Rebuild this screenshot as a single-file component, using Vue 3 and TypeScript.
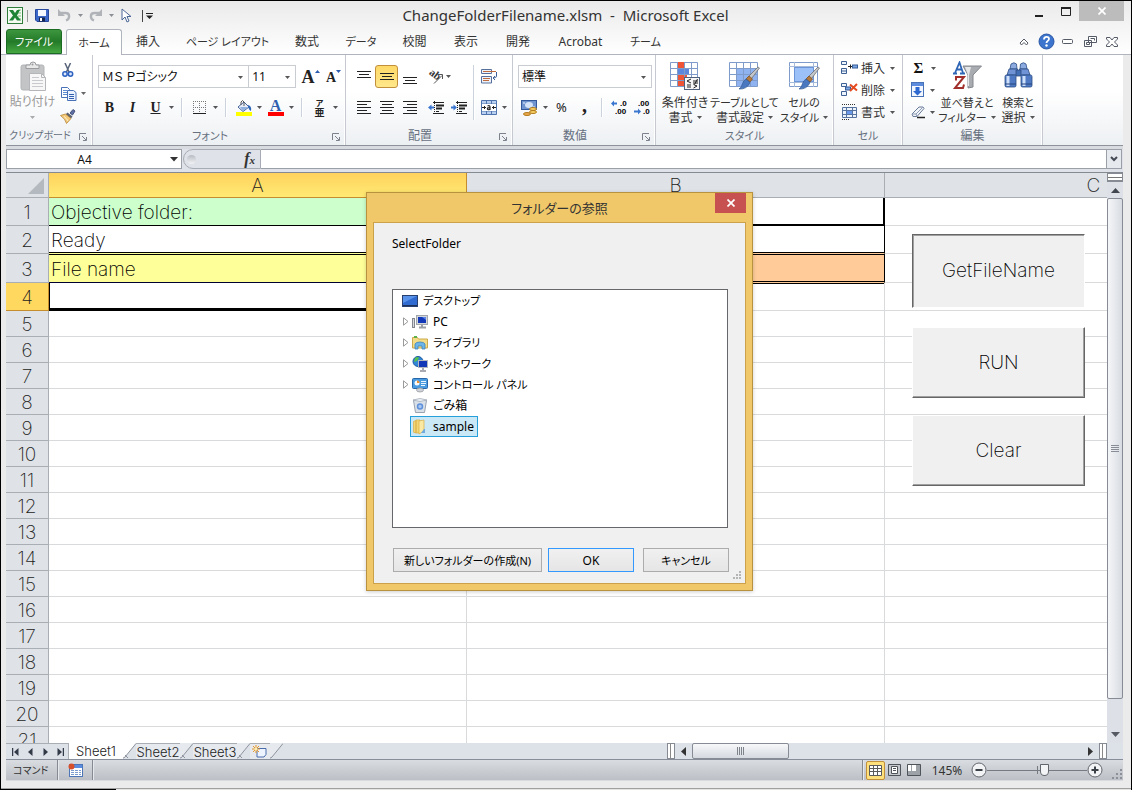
<script setup lang="ts">
import { ref } from 'vue'

interface Tab { label: string; width: number }
interface Row { n: number; a?: string; kind: string }
interface Node { label: string; icon: string; level: number; open: boolean }

const tabs: Tab[] = [
  { label: '挿入', width: 52 },
  { label: 'ページ レイアウト', width: 107 },
  { label: '数式', width: 52 },
  { label: 'データ', width: 56 },
  { label: '校閲', width: 51 },
  { label: '表示', width: 52 },
  { label: '開発', width: 52 },
  { label: 'Acrobat', width: 73 },
  { label: 'チーム', width: 57 },
]

const rows: Row[] = [
  { n: 1, a: 'Objective folder:', kind: 'r1' },
  { n: 2, a: 'Ready', kind: 'r2' },
  { n: 3, a: 'File name', kind: 'r3' },
  { n: 4, kind: 'r4' },
]
for (let n = 5; n <= 21; n++) rows.push({ n, kind: 'rn' })

const nodes: Node[] = [
  { label: 'デスクトップ', icon: 'desktop', level: 0, open: false },
  { label: 'PC', icon: 'pc', level: 1, open: true },
  { label: 'ライブラリ', icon: 'library', level: 1, open: true },
  { label: 'ネットワーク', icon: 'network', level: 1, open: true },
  { label: 'コントロール パネル', icon: 'panel', level: 1, open: true },
  { label: 'ごみ箱', icon: 'bin', level: 1, open: false },
  { label: 'sample', icon: 'folder', level: 1, open: false },
]
const isKana = (s: string): boolean => /[ァ-ヶ]/.test(s)

const selected = ref('sample')
const zoom = ref(58)
const font = ref('ms')
const size = ref('11')
const format = ref('std')
const formula = ref('')
const cellName = ref('A4')
</script>

<template>
  <div class="window">
    <header class="titlebar">
      <div class="quick">
        <svg width="16" height="17" viewBox="0 0 16 17"><rect x=".5" y=".5" width="15" height="16" fill="#f4fbf2" stroke="#2f7d3a" /><path d="M11 3h3M11 6h3M11 9h3M11 12h3" stroke="#7dbb7a" /><path d="M2 3h4l2 3 2-3h3L10 8.500l4 5h-4l-2-3-2 3H2l4-5z" fill="#1f8436" /></svg>
        <i class="bar"></i>
        <button class="q save" aria-label="上書き保存"><svg width="14" height="15" viewBox="0 0 14 15"><path d="M.5 1.500h13v12H2l-1.500-1.500z" fill="#3b68c9" stroke="#26479a" /><rect x="3" y="2" width="8" height="6" fill="#f5f9ff" /><rect x="4" y="9.500" width="6" height="4" fill="#17264d" /><rect x="5" y="10" width="2" height="3" fill="#fff" /></svg></button>
        <button class="q" aria-label="元に戻す"><svg width="13" height="13" viewBox="0 0 13 13"><path d="M3 4h4.500c5 0 4.500 6 .5 7.500" fill="none" stroke="#b0b3b8" stroke-width="2.400" /><path d="M0 0l7 7H0z" fill="#b0b3b8" /></svg></button>
        <svg class="caret" width="5" height="3"><path d="M0 0h5L2.500 3z" fill="#8b8f95" /></svg>
        <button class="q redo" aria-label="やり直し"><svg width="13" height="13" viewBox="0 0 13 13"><path d="M10 4H5.500c-5 0-4.500 6-.5 7.500" fill="none" stroke="#b0b3b8" stroke-width="2.400" /><path d="M13 0L6 7h7z" fill="#b0b3b8" /></svg></button>
        <svg class="caret" width="5" height="3"><path d="M0 0h5L2.500 3z" fill="#8b8f95" /></svg>
        <button class="q pointer" aria-label="オブジェクトの選択"><svg width="11" height="15" viewBox="0 0 11 15"><path d="M1 1v11l3-3 2 5 2-1-2-4.500h4z" fill="#fff" stroke="#4b6796" /></svg></button>
        <i class="bar dark"></i>
        <button class="q more" aria-label="カスタマイズ"><svg width="7" height="6"><path d="M0 .500h7" stroke="#222" /><path d="M0 2.500h7L3.500 6z" fill="#222" /></svg></button>
      </div>
      <h1>ChangeFolderFilename.xlsm&nbsp; -&nbsp; Microsoft Excel</h1>
      <div class="winctl">
        <button aria-label="最小化"><svg width="10" height="14"><path d="M1 12h8" stroke="#222" stroke-width="2" /></svg></button>
        <button aria-label="最大化"><svg width="10" height="9"><path d="M.5 1v7.500h9V1" fill="none" stroke="#222" /><path d="M0 1h10" stroke="#222" stroke-width="2" /></svg></button>
        <button class="x" aria-label="閉じる"><svg width="8" height="8"><path d="M.5.500l7 7M7.500.500l-7 7" stroke="#fff" stroke-width="1.700" /></svg></button>
      </div>
    </header>

    <nav class="tabs">
      <button class="file kana">ファイル</button>
      <button class="home kana">ホーム</button>
      <button v-for="t in tabs" :key="t.label" :class="{ kana: isKana(t.label) }" :style="{ width: t.width + 'px' }">{{ t.label }}</button>
      <span class="grow"></span>
      <button class="mini" aria-label="リボンの最小化"><svg width="10" height="8"><path d="M1 5l4-4 4 4-1.500 2L5 4.500 2.500 7z" fill="#fff" stroke="#555b66" /></svg></button>
      <button class="mini" aria-label="ヘルプ"><svg width="17" height="17"><circle cx="8.500" cy="8.500" r="7.500" fill="#3d74cd" stroke="#2b58a6" /><path d="M6 6.500c0-3.500 5-3.500 5-.5 0 2-2.500 1.800-2.500 4" fill="none" stroke="#fff" stroke-width="1.800" /><circle cx="8.500" cy="12.500" r="1.200" fill="#fff" /></svg></button>
      <button class="mini" aria-label="ブックを最小化"><svg width="12" height="6"><rect x=".5" y=".5" width="10" height="4" rx="1" fill="#fff" stroke="#555b66" /></svg></button>
      <button class="mini" aria-label="ブックを元に戻す"><svg width="13" height="11"><path d="M4.500.500h8v6h-8z M.500 4.500h7v6h-7z" fill="#fff" stroke="#555b66" /><path d="M2.500 6.500h3v2h-3zM6.500 2.500h4v2" fill="none" stroke="#555b66" /></svg></button>
      <button class="mini" aria-label="ブックを閉じる"><svg width="12" height="10"><path d="M.5.500h3.500l2 2.500 2-2.500h3.500v1.500L8.500 5l3 3v1.500H8L6 7 4 9.500H.500V8l3-3-3-3z" fill="#fff" stroke="#555b66" /></svg></button>
    </nav>

    <section class="ribbon">
      <div class="group clip">
        <div class="body">
          <button class="paste">
            <svg width="30" height="31" viewBox="0 0 30 31"><rect x="3" y="4" width="23" height="25" rx="2" fill="#c3c4c6" stroke="#b2b4b6" /><path d="M8 7.500V4h4q0-3 3-3t3 3h3v3.500z" fill="#e8e8e8" stroke="#999b9e" /><circle cx="14.500" cy="3.500" r="1" fill="#999b9e" /><path d="M11.500 12.500h12l4 4v13h-16z" fill="#f7f7f7" stroke="#b4b6b9" /><path d="M23.500 12.500v4h4" fill="none" stroke="#b4b6b9" /><path d="M14 16.500h7M14 19.500h11M14 22.500h11M14 25.500h11" stroke="#c8cacd" /></svg>
            <span>貼り付け</span>
            <svg class="caret" width="5" height="3"><path d="M0 0h5L2.500 3z" fill="#aaa" /></svg>
          </button>
          <div class="stack">
            <button class="ib" aria-label="切り取り"><svg width="12" height="15" viewBox="0 0 12 15"><path d="M3 0l4.500 10M8.500 0L4 10" stroke="#59657a" stroke-width="1.500" /><circle cx="3" cy="11" r="2.200" fill="#dce7fa" stroke="#2d62c0" stroke-width="1.500" /><circle cx="8.500" cy="11" r="2.200" fill="#dce7fa" stroke="#2d62c0" stroke-width="1.500" /></svg></button>
            <button class="ib wide" aria-label="コピー"><svg width="16" height="14" viewBox="0 0 16 14"><path d="M.5.500h6l2 2v8h-8z" fill="#fff" stroke="#4871b7" /><path d="M2 3.500h4M2 5.500h5M2 7.500h5" stroke="#5e8ad0" /><path d="M6.500 3.500h6l2.500 2v8H6.500z" fill="#eaf2ff" stroke="#4871b7" /><path d="M8 7.500h5M8 9.500h5M8 11.500h5" stroke="#2f5fae" /></svg><svg class="caret" width="5" height="3"><path d="M0 0h5L2.500 3z" fill="#666" /></svg></button>
            <button class="ib" aria-label="書式のコピー"><svg width="16" height="15" viewBox="0 0 16 15"><path d="M10 4l3-3.500 2 1.500-2.500 4z" fill="#5d6fa5" stroke="#48557e" /><path d="M7.500 3.500l5 4-1.500 2-5.500-4z" fill="#5c6270" /><path d="M.5 6.500L5.500 5 11 9.500 6.500 14.500q-1-4.500-6-8z" fill="#f3c979" stroke="#b78736" stroke-width=".8" /><path d="M4 7.500q3 2 4 4.500" fill="none" stroke="#fff2cf" /></svg></button>
          </div>
        </div>
        <footer>クリップボード<svg class="launch" width="8" height="8"><path d="M.5 7V.500H7M3 3l4 4M7.500 4v3.500H4" fill="none" stroke="#7b828d" /></svg></footer>
      </div>

      <div class="group fontg">
        <div class="body col">
          <div class="row">
            <label class="combo f1"><select v-model="font" aria-label="フォント"><option value="ms">ＭＳ Ｐゴシック</option></select><svg class="caret" width="5" height="3"><path d="M0 0h5L2.500 3z" fill="#555" /></svg></label>
            <label class="combo f2"><select v-model="size" aria-label="フォント サイズ"><option value="11">11</option></select><svg class="caret" width="5" height="3"><path d="M0 0h5L2.500 3z" fill="#555" /></svg></label>
            <button class="ib serif big" aria-label="フォント サイズの拡大">A<svg width="5" height="3"><path d="M0 3h5L2.500 0z" fill="#2c5cae" /></svg></button>
            <button class="ib serif small" aria-label="フォント サイズの縮小">A<svg width="5" height="3"><path d="M0 0h5L2.500 3z" fill="#2c5cae" /></svg></button>
          </div>
          <div class="row">
            <button class="ib serif"><b>B</b></button>
            <button class="ib serif"><em>I</em></button>
            <button class="ib serif"><u>U</u></button>
            <button class="dd" aria-label="下線"><svg width="5" height="3"><path d="M0 0h5L2.500 3z" fill="#555" /></svg></button>
            <i class="vs"></i>
            <button class="ib" aria-label="罫線"><svg width="13" height="13"><path d="M.5 0v12M6.500 0v12M12.500 0v12M0 .500h13M0 6.500h13" stroke="#777" stroke-dasharray="1 1" /><path d="M0 12.500h13" stroke="#222" /></svg></button>
            <button class="dd" aria-label="罫線の種類"><svg width="5" height="3"><path d="M0 0h5L2.500 3z" fill="#555" /></svg></button>
            <i class="vs"></i>
            <button class="ib" aria-label="塗りつぶしの色"><svg width="16" height="16"><path d="M2 7l6-5 5 5-6 4.500z" fill="#e8eef8" stroke="#46659c" /><path d="M4 7h8l-5 4z" fill="#8fb1e2" /><path d="M5 5V2q1.500-3 3 0v4" fill="none" stroke="#555" /><path d="M12 5q4 1 3 6-2-1-3-4z" fill="#2f67b8" /><rect y="12" width="16" height="4" fill="#ff0" /></svg></button>
            <button class="dd" aria-label="塗りつぶしの色の一覧"><svg width="5" height="3"><path d="M0 0h5L2.500 3z" fill="#555" /></svg></button>
            <button class="ib fc" aria-label="フォントの色"><span>A</span><i></i></button>
            <button class="dd" aria-label="フォントの色の一覧"><svg width="5" height="3"><path d="M0 0h5L2.500 3z" fill="#555" /></svg></button>
            <i class="vs"></i>
            <button class="ib ruby"><span>ア</span><span>亜</span></button>
            <button class="dd" aria-label="ふりがな"><svg width="5" height="3"><path d="M0 0h5L2.500 3z" fill="#555" /></svg></button>
          </div>
        </div>
        <footer class="kana">フォント<svg class="launch" width="8" height="8"><path d="M.5 7V.500H7M3 3l4 4M7.500 4v3.500H4" fill="none" stroke="#7b828d" /></svg></footer>
      </div>

      <div class="group align">
        <div class="body">
          <div class="col">
            <div class="row">
              <button class="ib va-top" aria-label="上揃え"><svg width="14" height="7"><path d="M0 .500h14M2 3.500h10M0 6.500h14" stroke="#222" /></svg></button>
              <button class="ib on" aria-label="上下中央揃え"><svg width="14" height="8"><path d="M0 .500h14M2 3.500h10M0 6.500h14" stroke="#222" /></svg></button>
              <button class="ib va-bottom" aria-label="下揃え"><svg width="14" height="7"><path d="M0 .500h14M2 3.500h10M0 6.500h14" stroke="#222" /></svg></button>
              <button class="ib orient" aria-label="方向"><svg width="17" height="16" viewBox="0 0 17 16"><text x="1" y="8" transform="rotate(38 6 7)" font-size="11" font-weight="700" fill="#333" font-family="Liberation Serif">ab</text><path d="M7 14.500l8-8M11 5.500h4.500V10" fill="none" stroke="#555" /></svg></button>
              <button class="dd" aria-label="方向の一覧"><svg width="5" height="3"><path d="M0 0h5L2.500 3z" fill="#555" /></svg></button>
            </div>
            <div class="row">
              <button class="ib" aria-label="左揃え"><svg width="14" height="13"><path d="M0 .500h14M0 3.500h10M0 6.500h14M0 9.500h10M0 12.500h14" stroke="#222" /></svg></button>
              <button class="ib" aria-label="中央揃え"><svg width="14" height="13"><path d="M0 .500h14M2 3.500h10M0 6.500h14M2 9.500h10M0 12.500h14" stroke="#222" /></svg></button>
              <button class="ib" aria-label="右揃え"><svg width="14" height="13"><path d="M0 .500h14M4 3.500h10M0 6.500h14M4 9.500h10M0 12.500h14" stroke="#222" /></svg></button>
              <button class="ib indent" aria-label="インデントを減らす"><svg width="16" height="14"><path d="M5 1.500h11M8 10.500h3M5 12.500h11" stroke="#222" /><path d="M8 4.500h8M8 7.500h6" stroke="#222" stroke-width="2" /><path d="M6.500 0v14" stroke="#222" stroke-dasharray="1 1" /><path d="M0 6.500l3.500-3v2H6v2H3.500v2z" fill="#3a76d0" /></svg></button>
              <button class="ib" aria-label="インデントを増やす"><svg width="16" height="14"><path d="M5 1.500h11M8 10.500h3M5 12.500h11" stroke="#222" /><path d="M8 4.500h8M8 7.500h6" stroke="#222" stroke-width="2" /><path d="M6.500 0v14" stroke="#222" stroke-dasharray="1 1" /><path d="M6 6.500l-3.500-3v2H0v2h2.500v2z" fill="#3a76d0" /></svg></button>
            </div>
          </div>
          <i class="vs tall"></i>
          <div class="col">
            <div class="row"><button class="ib" aria-label="折り返して全体を表示する"><svg width="16" height="15"><path d="M.5.500h10v4H.500zM.500 7.500h10v6.500H.500z" fill="#eef3fb" stroke="#56709b" /><path d="M2 2.500h13M2 9.500h7M2 11.500h6" stroke="#bf6a3d" /><path d="M15.500 3v4q0 2-3 2M14 7l-2 2 2 2" fill="none" stroke="#3c5f99" /></svg></button></div>
            <div class="row"><button class="ib" aria-label="セルを結合して中央揃え"><svg width="16" height="15"><path d="M.5.500h15v14H.500zM.500 4h15M.500 11h15M5.500.500V4M10.500.500V4M5.500 11v3.500M10.500 11v3.500" fill="#b9d0f0" stroke="#4f74ad" /><rect x="1" y="4" width="14" height="7" fill="#fff" /><path d="M1 7.500h4M15 7.500h-4M3 6l1.500 1.500L3 9M13 6l-1.500 1.500L13 9" fill="none" stroke="#222" /><path d="M6.500 6q2.500-1 2.500 1v3M9 7.500q-3 0-2.500 1.500t2.500 0" fill="none" stroke="#222" stroke-width="1.200" /></svg></button><button class="dd" aria-label="結合の一覧"><svg width="5" height="3"><path d="M0 0h5L2.500 3z" fill="#555" /></svg></button></div>
          </div>
        </div>
        <footer>配置<svg class="launch" width="8" height="8"><path d="M.5 7V.500H7M3 3l4 4M7.500 4v3.500H4" fill="none" stroke="#7b828d" /></svg></footer>
      </div>

      <div class="group num">
        <div class="body col">
          <div class="row"><label class="combo f3"><select v-model="format" aria-label="数値の書式"><option value="std">標準</option></select><svg class="caret" width="5" height="3"><path d="M0 0h5L2.500 3z" fill="#555" /></svg></label></div>
          <div class="row">
            <button class="ib cur" aria-label="通貨表示形式"><svg width="17" height="16"><rect x=".5" y=".5" width="15" height="9" fill="#6f94cf" stroke="#34599b" /><ellipse cx="8" cy="5" rx="4" ry="3" fill="#d5e3f8" /><path d="M2 3h2M12 7h2" stroke="#e9f1fc" /><ellipse cx="12" cy="9" rx="3.500" ry="1.500" fill="#f6cf64" stroke="#b17a1d" /><ellipse cx="12" cy="12" rx="3.500" ry="1.500" fill="#f6cf64" stroke="#b17a1d" /><ellipse cx="6" cy="14" rx="3.500" ry="1.500" fill="#e9a94c" stroke="#b17a1d" /></svg></button>
            <button class="dd" aria-label="通貨の一覧"><svg width="5" height="3"><path d="M0 0h5L2.500 3z" fill="#555" /></svg></button>
            <button class="ib pct">%</button>
            <button class="ib comma">,</button>
            <i class="vs"></i>
            <button class="ib dec" aria-label="小数点以下の表示桁数を増やす"><svg width="17" height="15" font-family="Liberation Sans" font-weight="700" font-size="8"><path d="M0 3.500L3 .500v2h3v2H3v2z" fill="#3a76d0" /><text x="9" y="6">.0</text><text x="4" y="14">.00</text></svg></button>
            <button class="ib dec" aria-label="小数点以下の表示桁数を減らす"><svg width="17" height="15" font-family="Liberation Sans" font-weight="700" font-size="8"><path d="M7 11.500l-3-3v2H0v2h4v2z" fill="#3a76d0" /><text x="4" y="6">.00</text><text x="9" y="14">.0</text></svg></button>
          </div>
        </div>
        <footer>数値<svg class="launch" width="8" height="8"><path d="M.5 7V.500H7M3 3l4 4M7.500 4v3.500H4" fill="none" stroke="#7b828d" /></svg></footer>
      </div>

      <div class="group style">
        <div class="body">
          <button class="large">
            <svg width="31" height="30" viewBox="0 0 31 30"><path d="M.5 1.500h27v24H.500z" fill="#fff" stroke="#7f9bc9" /><path d="M7 1h7v6H7zM7 13h10v6H7z" fill="#ee5536" /><path d="M7 7h12v6H7z" fill="#5b86dd" /><path d="M7 19h7v6H7z" fill="#ee5536" /><path d="M0 7.500h28M0 13.500h28M0 19.500h28M7.500 1v25M14.500 1v25M21.500 1v25" stroke="#7f9bc9" /><rect x="14.500" y="16.500" width="15" height="12" fill="#f7f7f7" stroke="#50617e" /><path d="M21 18l-4 2 4 2M17 24h4M17 26h4M23 20h5M23 22h5M27.500 18l-3 5.500M23.500 23.500l3.500 1.500-3.500 2" fill="none" stroke="#222" /></svg>
            <span>条件付き</span><span>書式<svg class="caret" width="5" height="3"><path d="M0 0h5L2.500 3z" fill="#555" /></svg></span>
          </button>
          <button class="large">
            <svg width="31" height="30" viewBox="0 0 31 30"><path d="M.5 1.500h28v24H.500z" fill="#fff" stroke="#7f9bc9" /><path d="M7 7h21v18H7z" fill="#8fb3f0" /><path d="M0 7.500h28M0 13.500h28M0 19.500h28M7.500 1v25M14.500 1v25M21.500 1v25" stroke="#7f9bc9" /><path d="M30.500 7l-9 12-3.500-2L29 6z" fill="#c2c5c9" stroke="#666" stroke-width=".7" /><path d="M20 15l3.500 3-2.500 3-4-3z" fill="#b5793b" stroke="#7a4c1c" stroke-width=".7" /><path d="M17 18l4 3.500q-3 7-11 6.500 3-2 3.500-5.500 1-3 3.500-4.500z" fill="#4a78c0" stroke="#31578f" stroke-width=".7" /></svg>
            <span class="kana">テーブルとして</span><span>書式設定<svg class="caret" width="5" height="3"><path d="M0 0h5L2.500 3z" fill="#555" /></svg></span>
          </button>
          <button class="large">
            <svg width="31" height="30" viewBox="0 0 31 30"><path d="M.5 1.500h28v24H.500z" fill="#fff" stroke="#7f9bc9" /><path d="M0 5.500h28M0 21.500h28M5.500 1v25M24.500 1v25" stroke="#a6bada" /><rect x="5.500" y="6.500" width="19" height="14" fill="#9cc0f8" stroke="#6c94d6" /><path d="M30.500 7l-9 12-3.500-2L29 6z" fill="#c2c5c9" stroke="#666" stroke-width=".7" /><path d="M20 15l3.500 3-2.500 3-4-3z" fill="#b5793b" stroke="#7a4c1c" stroke-width=".7" /><path d="M17 18l4 3.500q-3 7-11 6.500 3-2 3.500-5.500 1-3 3.500-4.500z" fill="#4a78c0" stroke="#31578f" stroke-width=".7" /></svg>
            <span class="kana">セルの</span><span class="kana">スタイル<svg class="caret" width="5" height="3"><path d="M0 0h5L2.500 3z" fill="#555" /></svg></span>
          </button>
        </div>
        <footer class="kana">スタイル</footer>
      </div>

      <div class="group cells">
        <div class="body col">
          <button class="line"><svg width="17" height="14"><path d="M.5.500h5v3h-5zM.500 7.500h5v5h-5zM.500 10h5" fill="#eef4fc" stroke="#3d5f93" /><path d="M7 5.500h4M9.500 3.500v4" fill="none" stroke="#222" /><rect x="11.500" y="4" width="5" height="3" fill="#7ba6e0" stroke="#345a98" /></svg><span>挿入</span><svg class="caret" width="5" height="3"><path d="M0 0h5L2.500 3z" fill="#555" /></svg></button>
          <button class="line"><svg width="17" height="14"><path d="M.5.500h5v3h-5zM.500 8.500h5v4h-5z" fill="#eef4fc" stroke="#3d5f93" /><rect x="4.500" y="4" width="5" height="3" fill="#7ba6e0" stroke="#345a98" /><path d="M9 1.500l7 6M16 1l-7 7" stroke="#e34a20" stroke-width="2" /></svg><span>削除</span><svg class="caret" width="5" height="3"><path d="M0 0h5L2.500 3z" fill="#555" /></svg></button>
          <button class="line"><svg width="17" height="16"><path d="M1.500 3.500h14v10h-14zM1 6.500h15M1 10.500h15M5.500 3v11M11.500 3v11" fill="#eef4fc" stroke="#56739f" /><rect x="6" y="7" width="5" height="3" fill="#6b9aec" /><path d="M1 .500h14M1 15.500h8" stroke="#333" stroke-dasharray="1 1" /></svg><span>書式</span><svg class="caret" width="5" height="3"><path d="M0 0h5L2.500 3z" fill="#555" /></svg></button>
        </div>
        <footer class="kana">セル</footer>
      </div>

      <div class="group edit">
        <div class="body">
          <div class="col tools">
            <button class="line" aria-label="オート SUM"><b class="sigma">Σ</b><svg class="caret" width="5" height="3"><path d="M0 0h5L2.500 3z" fill="#555" /></svg></button>
            <button class="line" aria-label="フィル"><svg width="14" height="16"><rect x=".5" y=".5" width="12" height="14" fill="#f2f7ff" stroke="#4872b8" /><rect x="1" y="1" width="11" height="3" fill="#5d8bdd" /><path d="M4.500 5h4v4H11l-4.500 4.500L2 9h2.500z" fill="#2d67d0" /></svg><svg class="caret" width="5" height="3"><path d="M0 0h5L2.500 3z" fill="#555" /></svg></button>
            <button class="line" aria-label="クリア"><svg width="14" height="13"><path d="M1 8l7-7h4l1 1.500-7 8H2z" fill="#f1f4f9" stroke="#6a7b97" /><path d="M1 8h4l7-7M5 8l1 2.500" fill="none" stroke="#8f9db5" /><path d="M6 11.500h8" stroke="#222" stroke-width="1.500" /></svg><svg class="caret" width="5" height="3"><path d="M0 0h5L2.500 3z" fill="#555" /></svg></button>
          </div>
          <button class="large">
            <svg width="31" height="30" viewBox="0 0 31 30"><path d="M11 5h18.500l-8.500 9v12l-5 1V14z" fill="#a9adb2" stroke="#83878d" /><path d="M13 6h6l-2 8v11h-1V14z" fill="#e4e6e8" /><path d="M1 12.500h4M8 12.500h5M3 12L7.500 1.500 11 12M4.500 8.500h5" fill="none" stroke="#2f66b5" stroke-width="1.800" /><path d="M4 19.500v-3.500h8L3 27h8l1-3.500" fill="none" stroke="#a12f2b" stroke-width="2" /></svg>
            <span class="kana">並べ替えと</span><span class="kana">フィルター<svg class="caret" width="5" height="3"><path d="M0 0h5L2.500 3z" fill="#555" /></svg></span>
          </button>
          <button class="large find">
            <svg width="31" height="30" viewBox="0 0 31 30"><g stroke="#2c4d84" stroke-width=".8"><path d="M8 3q3-2.500 5.500 0L14 8H7zM17.500 3q3-2.500 5.500 0l1 5h-7z" fill="#8aaae0" /><path d="M6 8h8.500v6H4zM16.500 8H25l2 6H16.500z" fill="#6f93d4" /><path d="M13 9h5v6h-5z" fill="#456fb4" /><rect x="2" y="14" width="11" height="12" rx="1.500" fill="#4f7ac3" /><rect x="18" y="14" width="11" height="12" rx="1.500" fill="#4f7ac3" /></g><path d="M5 15v10M21 15v10" stroke="#cfe0fa" stroke-width="3" /><path d="M2 23h11M18 23h11" stroke="#26457c" /></svg>
            <span class="kana">検索と</span><span>選択<svg class="caret" width="5" height="3"><path d="M0 0h5L2.500 3z" fill="#555" /></svg></span>
          </button>
        </div>
        <footer>編集</footer>
      </div>
    </section>

    <div class="formula">
      <div class="namebox"><input v-model="cellName" aria-label="名前ボックス"><svg width="8" height="5"><path d="M0 0h8L4 4.500z" fill="#333" /></svg></div>
      <button class="fx" aria-label="関数の挿入"><i></i><em>f<small>x</small></em></button>
      <input v-model="formula" class="entry" aria-label="数式バー">
      <button class="expand" aria-label="数式バーの展開"><svg width="8" height="6"><path d="M1 1l3 3 3-3" fill="none" stroke="#444a55" stroke-width="2" /></svg></button>
    </div>

    <main class="work">
      <div class="sheet">
        <table>
          <colgroup><col class="ch"><col class="cc"><col class="cc"><col class="cc"></colgroup>
          <thead><tr><th class="corner"><svg width="16" height="16"><path d="M16 0v16H0z" fill="#b4b9c0" /></svg></th><th class="active">A</th><th>B</th><th>C</th></tr></thead>
          <tbody>
            <tr v-for="r in rows" :key="r.n" :class="r.kind"><th>{{ r.n }}</th><td class="a">{{ r.a }}</td><td class="b"></td><td></td></tr>
          </tbody>
        </table>
        <button class="act one">GetFileName</button>
        <button class="act two">RUN</button>
        <button class="act three">Clear</button>
      </div>
      <div class="vscroll">
        <i class="vsplit"></i>
        <button aria-label="上へ"><svg width="9" height="5"><path d="M0 5h9L4.500 0z" fill="#41454d" /></svg></button>
        <div class="vthumb"><svg width="8" height="8"><path d="M0 .500h8M0 2.500h8M0 4.500h8M0 6.500h8" stroke="#888d96" /></svg></div>
        <button class="down" aria-label="下へ"><svg width="9" height="5"><path d="M0 0h9L4.500 5z" fill="#555a63" /></svg></button>
      </div>
    </main>

    <div class="sheetbar">
      <div class="navs">
        <button aria-label="先頭"><svg width="7" height="8"><path d="M.5 0v8" stroke="#333a48" stroke-width="1.500" /><path d="M6.500 0v8L2 4z" fill="#333a48" /></svg></button>
        <button aria-label="前へ"><svg width="5" height="8"><path d="M4.500 0v8L0 4z" fill="#333a48" /></svg></button>
        <button aria-label="次へ"><svg width="5" height="8"><path d="M.5 0v8L5 4z" fill="#333a48" /></svg></button>
        <button aria-label="最後"><svg width="7" height="8"><path d="M6.500 0v8" stroke="#333a48" stroke-width="1.500" /><path d="M.5 0v8L5 4z" fill="#333a48" /></svg></button>
      </div>
      <button class="st first">Sheet1</button>
      <svg class="slant" width="13" height="16"><path d="M0 0h13L2 14q-1 1-2 1z" fill="#fff" /><path d="M0 15q1 0 2-1L13 .500M2 12l3 3" fill="none" stroke="#8e949e" /></svg>
      <button class="st">Sheet2</button>
      <svg class="slant" width="13" height="16"><path d="M0 0h13L2 14q-1 1-2 1z" fill="#e6e9ee" /><path d="M0 15q1 0 2-1L13 .500M2 12l3 3" fill="none" stroke="#8e949e" /></svg>
      <button class="st">Sheet3</button>
      <svg class="slant" width="13" height="16"><path d="M0 0h13L2 14q-1 1-2 1z" fill="#e6e9ee" /><path d="M0 15q1 0 2-1L13 .500M2 12l3 3" fill="none" stroke="#8e949e" /></svg>
      <button class="st new" aria-label="ワークシートの挿入"><svg width="16" height="13"><path d="M5 3.500h9v6l-2 2.500H5z" fill="#eef4ff" stroke="#4a6cab" /><path d="M4 0v8M0 4h8M1 1l6 6M7 1L1 7" stroke="#e8972a" /><circle cx="4" cy="4" r="1.500" fill="#fff0b0" /></svg></button>
      <svg class="slant" width="13" height="16"><path d="M0 0h13L2 14q-1 1-2 1z" fill="#e6e9ee" /><path d="M0 15q1 0 2-1L13 .500" fill="none" stroke="#8e949e" /></svg>
      <span class="grow"></span>
      <div class="hscroll">
        <i class="hsplit"></i>
        <button aria-label="左へ"><svg width="5" height="9"><path d="M5 0v9L0 4.500z" fill="#333" /></svg></button>
        <div class="hthumb"><svg width="8" height="8"><path d="M.5 0v8M2.500 0v8M4.500 0v8M6.500 0v8" stroke="#7d828b" /></svg></div>
        <span class="grow"></span>
        <button aria-label="右へ"><svg width="5" height="9"><path d="M0 0v9l5-4.500z" fill="#333" /></svg></button>
        <i class="hsplit"></i>
      </div>
    </div>

    <footer class="status">
      <span class="mode">コマンド</span>
      <i class="ss"></i>
      <button class="macro" aria-label="マクロの記録"><svg width="16" height="14"><rect x="1.500" y="1.500" width="13" height="12" fill="#fff" stroke="#4d76b8" /><rect x="2" y="2" width="12" height="3" fill="#5a8de0" /><path d="M3 7.500h10M3 9.500h10M3 11.500h10" stroke="#7a9cd0" stroke-dasharray="3 1" /><circle cx="3.500" cy="3.500" r="3" fill="#d6502b" /></svg></button>
      <i class="ss"></i>
      <span class="grow"></span>
      <i class="ss"></i>
      <button class="view sel" aria-label="標準"><svg width="13" height="11"><path d="M.5.500h12v10H.500zM0 3.500h13M0 6.500h13M4.500 0v11M8.500 0v11" fill="#fff" stroke="#5b5b5b" /></svg></button>
      <button class="view" aria-label="ページ レイアウト"><svg width="13" height="12"><path d="M.5.500h12v11H.500z" fill="#c5c8cd" stroke="#4f535a" /><path d="M3.500 2.500h6v7h-6z" fill="#fff" stroke="#4f535a" /><path d="M5 4.500h3M5 6.500h3" stroke="#4f535a" /></svg></button>
      <button class="view" aria-label="改ページ プレビュー"><svg width="14" height="12"><path d="M.5.500h13v11H.500z" fill="#9da1a8" stroke="#4f535a" /><path d="M1 1h3v6H1zM5 1h4v6H5z" fill="#fff" /></svg></button>
      <span class="pct145">145%</span>
      <button class="zb" aria-label="縮小"><svg width="16" height="16"><circle cx="8" cy="8" r="7" fill="#f2f3f4" stroke="#63676e" /><path d="M4.500 8h7" stroke="#3c4047" stroke-width="2" /></svg></button>
      <input v-model="zoom" type="range" min="0" max="100" aria-label="ズーム">
      <button class="zb" aria-label="拡大"><svg width="16" height="16"><circle cx="8" cy="8" r="7" fill="#f2f3f4" stroke="#63676e" /><path d="M4.500 8h7M8 4.500v7" stroke="#3c4047" stroke-width="2" /></svg></button>
      <svg class="grip" width="11" height="11"><path d="M8 1h2M4 5h2M8 5h2M0 9h2M4 9h2M8 9h2" stroke="#8c9098" stroke-width="2" /></svg>
    </footer>
    <div class="edge"></div>
    <div class="desk"></div>

    <section class="dialog" role="dialog" aria-label="フォルダーの参照">
      <header><h2>フォルダーの参照</h2><button aria-label="閉じる"><svg width="8" height="8"><path d="M.5.500l7 7M7.500.500l-7 7" stroke="#fff" stroke-width="1.700" /></svg></button></header>
      <div class="dbody">
        <p>SelectFolder</p>
        <ul>
          <li v-for="n in nodes" :key="n.label" :class="{ child: n.level === 1 }">
            <span class="tw"><svg v-if="n.open" width="6" height="9"><path d="M.5.800v7.400L5 4.500z" fill="#fff" stroke="#9a9a9a" /></svg></span>
            <button :class="{ chosen: selected === n.label }" @click="selected = n.label">
              <svg width="16" height="16" viewBox="0 0 16 16">
                <template v-if="n.icon === 'desktop'"><rect x=".5" y="2.500" width="15" height="11" fill="#2f6bd0" stroke="#27406f" /><path d="M1 3h14L1 10z" fill="#5a94ea" /><path d="M1 12.500h14" stroke="#1d3158" /></template>
                <template v-else-if="n.icon === 'pc'"><rect x="4.500" y="1.500" width="11" height="9" fill="#d2d5da" stroke="#a1a5ac" /><rect x="6" y="3" width="8" height="6" fill="#1238b8" /><path d="M10 3h4v3z" fill="#5b83ea" /><path d="M7 13.500h7M10 11v2" stroke="#9a9ea5" stroke-width="2" /><rect x=".5" y="4.500" width="2" height="9" fill="#d8dadd" stroke="#83878e" /></template>
                <template v-else-if="n.icon === 'library'"><path d="M.5 2.500h5l1 1.500h9v9H.500z" fill="#f3dc87" stroke="#cfa94a" /><path d="M2 2h3" stroke="#5db14a" stroke-width="2" /><path d="M3 14V9q1-2 5-2t5 2v5h-3v-3H6v3z" fill="#6eb5e8" stroke="#3c83bd" stroke-width=".8" /></template>
                <template v-else-if="n.icon === 'network'"><circle cx="6" cy="5.500" r="5" fill="#3186d8" stroke="#1c57a0" /><path d="M3 2q3-2 4 0L5 5 2 6zM6 6l3 1-2 3z" fill="#56c14d" /><rect x="6.500" y="4.500" width="9" height="7" fill="#1238b8" stroke="#b3b7be" /><path d="M11 12v2M8 15h6" stroke="#8b9098" stroke-width="1.500" /></template>
                <template v-else-if="n.icon === 'panel'"><rect x=".5" y="1.500" width="15" height="10" rx="1" fill="#4a9ae0" stroke="#2567aa" /><circle cx="5" cy="6" r="2.500" fill="#f9f9f9" /><path d="M5 6V3.500A2.500 2.500 0 0 1 7.500 6z" fill="#e98b2a" /><path d="M9 4.500h5M9 6.500h5M9 8.500h4" stroke="#e8f4ff" /><ellipse cx="8" cy="13" rx="3.500" ry="2" fill="#cfd2d6" stroke="#8f9399" stroke-width=".7" /></template>
                <template v-else-if="n.icon === 'bin'"><path d="M1.500 2.500h13l-2 12h-9z" fill="#d9e0e8" stroke="#9aa4b0" /><path d="M1 2q7-3 14 0-7 3-14 0z" fill="#eff3f7" stroke="#9aa4b0" stroke-width=".7" /><circle cx="8" cy="8.500" r="2.500" fill="#a9c8f2" stroke="#5f90da" stroke-width="1.500" /></template>
                <template v-else><path d="M1.500 2.500L4 1.500V14l-2.500-.8zM4 1h4v13H4z" fill="#f3d675" stroke="#d8af46" stroke-width=".7" /><path d="M7 2l5-1v11l-5 3z" fill="#fae9a4" stroke="#d8af46" stroke-width=".7" /><path d="M12 10h1v4H9z" fill="#6fa9de" /></template>
              </svg>
              <span :class="{ kana: isKana(n.label) }">{{ n.label }}</span>
            </button>
          </li>
        </ul>
        <div class="acts"><button class="nf kana">新しいフォルダーの作成(N)</button><button class="ok">OK</button><button class="kana">キャンセル</button></div>
        <svg class="dgrip" width="9" height="9"><path d="M6 1h2M3 4h2M6 4h2M0 7h2M3 7h2M6 7h2" stroke="#b5b5b5" stroke-width="2" /></svg>
      </div>
    </section>
  </div>
</template>

<style>
html, body { margin: 0; overflow: hidden; }
</style>

<style scoped>
* { box-sizing: border-box; }
.window {
  position: relative; display: flex; flex-direction: column; height: 100vh; overflow: hidden;
  border: 1px solid #000; border-bottom: 0; padding: 0 8px 0 5px; background: #ebebeb;
  font: 12px/15px "Noto Sans", "Noto Sans CJK JP", sans-serif; font-feature-settings: "palt"; color: #333;
}
button, input, select { font: inherit; color: inherit; margin: 0; padding: 0; border: 0; background: none; font-feature-settings: inherit; border-radius: 0; outline: 0; }
button { display: flex; align-items: center; justify-content: center; white-space: nowrap; }
svg { display: block; flex: none; }
h1, h2, p, ul { margin: 0; padding: 0; font-weight: 400; list-style: none; }
.grow { flex: 1; }
.col { display: flex; flex-direction: column; }
.kana { font-size: 11px; }

.titlebar { display: grid; grid-template-columns: 1fr auto 1fr; height: 28px; flex: none; margin: 0 -8px 0 -5px; padding: 0 7px 0 6px; background: linear-gradient(#eaeaea, #f5f5f5); }
.quick { display: flex; align-items: center; }
.bar { width: 1px; height: 12px; margin: 0 7px 0 4px; background: #999; }
.bar.dark { margin: 0 2px 0 9px; background: #444; }
.q { width: 14px; height: 20px; margin-right: 8px; }
.quick .caret { margin: 0 5px 0 -1px; }
.q.pointer { margin: 0; }
.more { width: 9px; }
h1 { font-size: 15px; line-height: 29px; color: #333; white-space: nowrap; }
.winctl { display: flex; justify-content: flex-end; align-items: flex-start; }
.winctl button { width: 27px; height: 20px; }
.winctl .x { width: 45px; background: #bcbcbc; }

.tabs { display: flex; align-items: flex-end; height: 26px; flex: none; margin: 0 -8px 0 -5px; padding: 0 8px 0 5px; background: linear-gradient(#f5f5f5, #fff); border-bottom: 1px solid #b0b5bd; }
.tabs button { height: 25px; flex: none; }
.tabs .file { width: 56px; color: #fff; border: 1px solid #1c6b22; border-radius: 3px 3px 0 0; background: linear-gradient(#3d963f, #237a28 50%, #46a842); }
.tabs .home { width: 56px; height: 26px; margin: 0 0 -1px 4px; border: 1px solid #b0b5bd; border-bottom: 0; border-radius: 3px 3px 0 0; background: #fff; }
.tabs .mini { width: 22px; }

.ribbon { display: flex; height: 91px; flex: none; background: linear-gradient(#fff 40%, #edf0f3); border-bottom: 1px solid #8e9299; }
.group { display: flex; flex-direction: column; flex: none; border-right: 1px solid #c6cad0; box-shadow: inset -1px 0 #fff; }
.body { display: flex; flex: 1; min-height: 0; }
.group footer { display: flex; align-items: center; justify-content: center; position: relative; height: 19px; color: #66707f; }
.launch { position: absolute; right: 5px; top: 7px; }
.clip { width: 87px; } .fontg { width: 253px; } .align { width: 167px; } .num { width: 143px; } .style { width: 178px; } .cells { width: 69px; } .edit { width: 140px; }
.group.clip footer { padding-right: 18px; font-size: 10px; }
.fontg footer, .num footer { padding-right: 18px; }
.align footer { padding-right: 18px; }
.paste { flex-direction: column; justify-content: flex-start; width: 50px; padding: 6px 0 0 3px; color: #999; }
.paste span { line-height: 20px; }
.paste .caret { margin-top: 4px; }
.stack { display: flex; flex-direction: column; padding-top: 4px; }
.ib { position: relative; width: 23px; height: 23px; flex: none; }
.ib.wide { width: 32px; gap: 4px; padding-left: 2px; }
.fontg .body, .num .body { padding: 10px 0 0 5px; gap: 8px; }
.align .body { padding: 10px 0 0 6px; }
.align .col { gap: 8px; }
.row { display: flex; align-items: center; height: 23px; }
.dd { width: 9px; height: 23px; flex: none; }
.vs { width: 2px; height: 19px; margin: 0 5px; background: linear-gradient(90deg, #cdd3dc 1px, #fff 1px); }
.vs.tall { height: 55px; margin: 0 2px 0 3px; }
.combo { position: relative; height: 23px; border: 1px solid #c9ccd1; background: #fff; color: #111; }
.combo select { appearance: none; width: 100%; height: 100%; padding-left: 3px; }
.combo .caret { position: absolute; right: 5px; top: 10px; }
.f1 { width: 152px; } .f2 { width: 47px; margin-right: 3px; border-left: 0; } .f3 { width: 134px; }
.serif { font-family: "Liberation Serif", serif; font-size: 14px; color: #222; }
.serif.big { font-size: 18px; font-weight: 700; align-items: flex-start; line-height: 24px; }
.serif.small { font-size: 14px; font-weight: 700; align-items: flex-start; line-height: 26px; }
.serif.big svg, .serif.small svg { margin-top: 5px; }
.serif u, .serif em { font-weight: 700; }
.fc { flex-direction: column; font: 700 16px/13px "Liberation Serif", serif; color: #2f5fae; }
.fc i { width: 16px; height: 4px; background: #f00; }
.ruby { flex-direction: column; font-size: 8px; line-height: 8px; font-weight: 700; color: #222; }
.ruby span + span { font-size: 10px; line-height: 10px; }
.ib.on { border: 1px solid #c2903a; border-radius: 3px; background: linear-gradient(#ffd968, #ffe78a); }
.va-top { padding-bottom: 5px; } .va-bottom { padding-top: 7px; }
.orient, .indent { margin-left: 3px; }
.orient + .dd { margin-left: -3px; }
.pct { font-size: 13px; color: #222; }
.comma { font: 700 20px/10px "Liberation Serif", serif; color: #222; padding-bottom: 6px; }
.large { flex-direction: column; justify-content: flex-start; padding-top: 6px; min-width: 0; }
.large > svg { margin-bottom: 4px; }
.large span { display: flex; align-items: center; gap: 4px; line-height: 15px; }
.style .body { padding-left: 1px; }
.style .large { flex: 0 0 56px; }
.style .large:nth-child(2) { flex-basis: 63px; }
.cells .body { padding: 2px 0 0 7px; }
.line { height: 22px; gap: 3px; justify-content: flex-start; }
.line .caret { margin-left: 2px; }
.tools { width: 33px; padding: 2px 0 0 8px; }
.sigma { width: 15px; font: 700 15px/16px "Liberation Serif", serif; color: #111; text-align: center; }
.edit .large { width: 62px; }
.edit .find { width: 40px; }

.formula { display: flex; flex: none; height: 27px; padding: 3px 1px 3px 0; background: linear-gradient(#d8dbe0 3px, #dfe2e8 3px); border-bottom: 1px solid #858a92; }
.namebox { display: flex; align-items: center; width: 176px; padding-right: 3px; border: 1px solid #9ba0a8; background: #fff; }
.namebox input { flex: 1; min-width: 0; padding-right: 8px; text-align: center; color: #111; }
.fx { width: 78px; justify-content: space-between; padding: 0 5px 0 3px; border: 1px solid #a7acb4; border-radius: 10px 0 0 10px; background: #dfe2e8; margin-left: 1px; }
.fx i { width: 9px; height: 9px; border-radius: 50%; background: linear-gradient(#b8bcc3, #f2f3f5); }
.fx em { font: italic 700 16px/16px "Liberation Serif", serif; color: #333; }
.fx small { font-size: 11px; }
.entry { flex: 1; min-width: 0; border: solid #9ba0a8; border-width: 1px 0; background: #fff; }
.expand { width: 16px; border: 1px solid #9ba0a8; background: #e6e9ed; }

.work { display: flex; flex: 1; min-height: 0; }
.sheet { position: relative; flex: 1; min-width: 0; overflow: hidden; background: #fff; }
table { table-layout: fixed; width: 1297px; border-collapse: separate; border-spacing: 0; font: 200 19px/22px Inter, "Noto Sans CJK JP", sans-serif; color: #000; }
.ch { width: 43px; } .cc { width: 418px; }
th, td { padding: 3px 0 0; height: 26px; overflow: hidden; white-space: nowrap; border: solid #d9dadc; border-width: 0 1px 1px 0; }
th { font-weight: 200; background: #dfe2e7; border-color: #a9adb4; color: #222; text-align: center; }
td { padding-left: 2px; }
thead th { height: 25px; padding-top: 2px; }
.corner svg { margin-left: 22px; }
thead .active { background: linear-gradient(#ffd25c, #ffea74); border-color: #c68d2e; }
.r1 > *, .r2 > *, .r4 > * { height: 28px; }
.r3 > * { height: 29px; }
.r1 .a { background: #cfc; border-color: #cfc; border-bottom-color: #000; }
.r1 .b { border-color: #000; box-shadow: inset -1px -1px #000; }
.r2 .a, .r2 .b { box-shadow: inset 0 -1px #000; border-bottom-color: #ff9; }
.r2 .b { border-right-color: #000; border-bottom-color: #fc9; }
.r3 .a { background: #ff9; box-shadow: inset 0 1px #000; border-bottom-color: #003; }
.r3 .b { background: #fc9; box-shadow: inset 0 1px #000, inset 0 -1px #000; border-right-color: #000; border-bottom-color: #fc9; }
.r4 th { background: #ffd860; border-color: #c68d2e; }
.r4 .a { border-bottom-color: #000; box-shadow: inset 1px 0 #000, inset 0 -2px #000; }
.r4 .b { box-shadow: inset 0 1px #000; }
.act { position: absolute; left: 906px; width: 173px; height: 71px; background: #f0f0f0; border: 1px solid; border-color: #fff #666 #666 #fff; box-shadow: inset -1px -1px #a0a0a0; font: 200 19px/22px Inter, sans-serif; color: #000; }
.one { top: 61px; height: 74px; border-color: #666 #fff #fff #666; box-shadow: inset 1px 1px #a0a0a0; }
.two { top: 154px; }
.three { top: 242px; }

.vscroll { display: flex; flex-direction: column; width: 16px; flex: none; background: #dde1e7; }
.vsplit { height: 9px; border: 2px solid #868b93; border-width: 1px 1px 2px; background: linear-gradient(#fff 3px, #777 3px, #777 4px, #fff 4px); }
.vscroll button { height: 16px; }
.vthumb { display: flex; align-items: center; justify-content: center; flex: 1; border: 1px solid #868b95; border-radius: 2px; background: linear-gradient(90deg, #f5f6f8, #d8dce2); }
.vscroll .down { margin-top: 27px; height: 17px; }

.sheetbar { display: flex; height: 17px; flex: none; padding-right: 16px; background: #dde1e8; border-bottom: 1px solid #878d99; }
.navs { display: flex; width: 63px; padding-left: 2px; border: solid #a9adb4; border-width: 1px 1px 0 0; background: #dde1e8; }
.navs button { flex: 1; }
.st { width: 44px; flex: none; border-top: 1px solid #a9adb4; background: #e6e9ee; font: 300 13px/14px Inter, sans-serif; color: #222; }
.first { width: 54px; border: 0; background: #fff; }
.new { width: 20px; }
.hscroll { display: flex; width: 440px; }
.hsplit { width: 8px; border: 1px solid #868b93; background: linear-gradient(90deg, #fff 2px, #888 2px, #888 3px, #fff 3px); }
.hscroll button { width: 17px; }
.hthumb { display: flex; align-items: center; justify-content: center; width: 97px; border: 1px solid #868b95; border-radius: 2px; background: linear-gradient(#f7f8f9, #d5dae1); }

.status { display: flex; align-items: center; height: 21px; flex: none; background: linear-gradient(#d9dce0, #bcc0c6); border-bottom: 1px solid #d8dade; }
.mode { width: 51px; padding-left: 7px; font-size: 10px; }
.ss { width: 2px; height: 20px; background: linear-gradient(90deg, #858a92 1px, #e6e8eb 1px); }
.macro { width: 33px; }
.view { width: 19px; height: 19px; }
.sel { margin-left: 2px; border: 1px solid #c2903a; border-radius: 2px; background: #ffe07a; }
.pct145 { width: 48px; text-align: center; }
.zb { width: 16px; }
.status input { appearance: none; width: 100px; height: 18px; background: linear-gradient(#767b83, #767b83) center / 100% 1px no-repeat, linear-gradient(#767b83, #767b83) 50px center / 1px 8px no-repeat; }
.status input::-webkit-slider-thumb { appearance: none; width: 9px; height: 12px; border: 1px solid #62666d; border-radius: 1px 1px 5px 5px; background: #f3f4f5; }
.grip { margin: 8px 0 0 9px; }
.edge { height: 8px; flex: none; margin: 0 -8px 0 -5px; border-bottom: 1px solid #a0a0a0; }
.desk { height: 1px; flex: none; margin: 0 -8px 0 -5px; background: linear-gradient(90deg, #000 115px, #e4e4e0 115px); }

.dialog { position: absolute; left: 365px; top: 191px; width: 387px; border: 1px solid #b8923f; background: #f0c869; padding: 0 6px 6px; box-shadow: 0 1px 4px #0003; }
.dialog header { position: relative; height: 29px; }
h2 { font-size: 13px; line-height: 31px; text-align: center; color: #333; }
.dialog header button { position: absolute; right: 0; top: 0; width: 31px; height: 20px; background: #c75050; }
.dbody { position: relative; padding: 13px 17px 11px 18px; border: 1px solid #cba24a; background: #f0f0f0; color: #000; }
.dbody p { height: 53px; line-height: 16px; }
.dialog ul { height: 239px; border: 1px solid #65676b; background: #fff; }
li { display: flex; height: 21px; padding-left: 7px; }
li.child { padding-left: 10px; }
.tw { display: flex; align-items: center; width: 7px; }
li:not(.child) .tw { width: 0; }
li button { height: 21px; padding: 0 3px 0 1px; gap: 5px; border: 1px solid transparent; }
.chosen { background: #cbe8f6; border-color: #26a0da; }
.acts { display: flex; gap: 9px; margin: 20px -1px 0 1px; }
.acts button { width: 86px; height: 24px; flex: none; border: 1px solid #acacac; background: linear-gradient(#f0f0f0, #e5e5e5); }
.acts .nf { width: 149px; margin-right: -3px; }
.acts .ok { border-color: #3399ff; }
.dgrip { position: absolute; right: 3px; bottom: 3px; }
</style>
